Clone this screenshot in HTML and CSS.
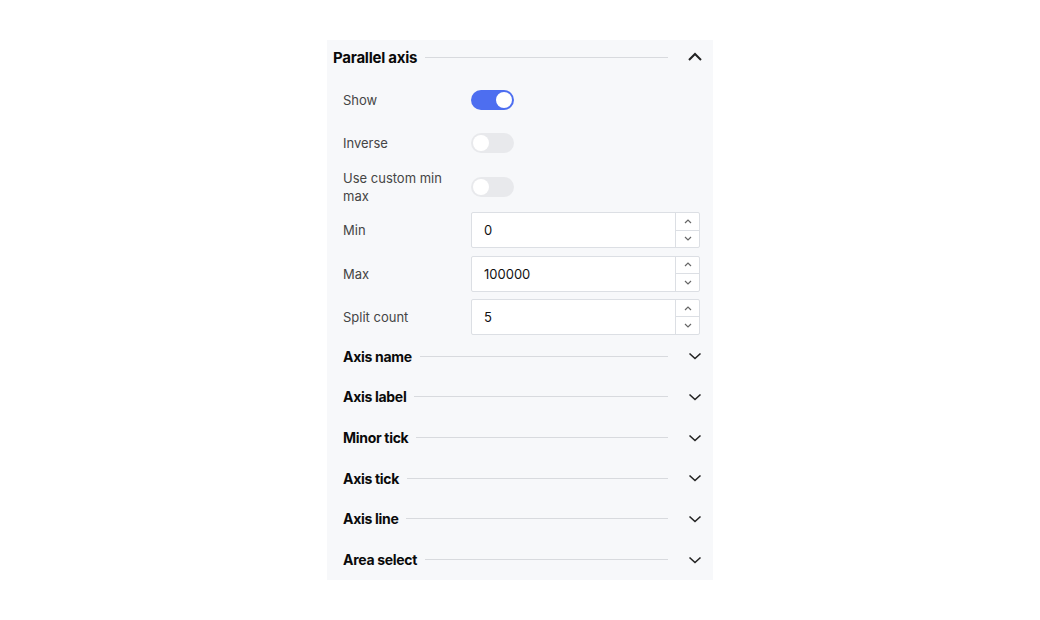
FILE: index.html
```html
<!DOCTYPE html>
<html>
<head>
<meta charset="utf-8">
<link rel="stylesheet" href="styles.css">
</head>
<body>
<div class="panel">
  <div class="head">
    <span class="head-title">Parallel axis</span>
    <span class="rule"></span>
    <svg class="chev-up" width="16" height="10" viewBox="0 0 16 10"><path d="M2 8 L8 2 L14 8" fill="none" stroke="#222" stroke-width="2"/></svg>
  </div>
  <div class="rows">
    <div class="row">
      <div class="label">Show</div>
      <div class="toggle on"><span class="knob"></span></div>
    </div>
    <div class="row">
      <div class="label">Inverse</div>
      <div class="toggle"><span class="knob"></span></div>
    </div>
    <div class="row">
      <div class="label">Use custom min max</div>
      <div class="toggle"><span class="knob"></span></div>
    </div>
    <div class="row">
      <div class="label">Min</div>
      <div class="num">
        <span class="val">0</span>
        <div class="spin">
          <span class="btn"><svg width="8" height="5" viewBox="0 0 8 5"><path d="M1 4 L4 1 L7 4" fill="none" stroke="#666" stroke-width="1.2"/></svg></span>
          <span class="btn"><svg width="8" height="5" viewBox="0 0 8 5"><path d="M1 1 L4 4 L7 1" fill="none" stroke="#666" stroke-width="1.2"/></svg></span>
        </div>
      </div>
    </div>
    <div class="row">
      <div class="label">Max</div>
      <div class="num">
        <span class="val">100000</span>
        <div class="spin">
          <span class="btn"><svg width="8" height="5" viewBox="0 0 8 5"><path d="M1 4 L4 1 L7 4" fill="none" stroke="#666" stroke-width="1.2"/></svg></span>
          <span class="btn"><svg width="8" height="5" viewBox="0 0 8 5"><path d="M1 1 L4 4 L7 1" fill="none" stroke="#666" stroke-width="1.2"/></svg></span>
        </div>
      </div>
    </div>
    <div class="row">
      <div class="label">Split count</div>
      <div class="num">
        <span class="val">5</span>
        <div class="spin">
          <span class="btn"><svg width="8" height="5" viewBox="0 0 8 5"><path d="M1 4 L4 1 L7 4" fill="none" stroke="#666" stroke-width="1.2"/></svg></span>
          <span class="btn"><svg width="8" height="5" viewBox="0 0 8 5"><path d="M1 1 L4 4 L7 1" fill="none" stroke="#666" stroke-width="1.2"/></svg></span>
        </div>
      </div>
    </div>
  </div>
  <div class="sections">
    <div class="sec"><span class="sec-title">Axis name</span><span class="rule"></span><svg class="chev" width="16" height="10" viewBox="0 0 16 10"><path d="M2.5 2.5 L8 7.5 L13.5 2.5" fill="none" stroke="#222" stroke-width="1.6"/></svg></div>
    <div class="sec"><span class="sec-title">Axis label</span><span class="rule"></span><svg class="chev" width="16" height="10" viewBox="0 0 16 10"><path d="M2.5 2.5 L8 7.5 L13.5 2.5" fill="none" stroke="#222" stroke-width="1.6"/></svg></div>
    <div class="sec"><span class="sec-title">Minor tick</span><span class="rule"></span><svg class="chev" width="16" height="10" viewBox="0 0 16 10"><path d="M2.5 2.5 L8 7.5 L13.5 2.5" fill="none" stroke="#222" stroke-width="1.6"/></svg></div>
    <div class="sec"><span class="sec-title">Axis tick</span><span class="rule"></span><svg class="chev" width="16" height="10" viewBox="0 0 16 10"><path d="M2.5 2.5 L8 7.5 L13.5 2.5" fill="none" stroke="#222" stroke-width="1.6"/></svg></div>
    <div class="sec"><span class="sec-title">Axis line</span><span class="rule"></span><svg class="chev" width="16" height="10" viewBox="0 0 16 10"><path d="M2.5 2.5 L8 7.5 L13.5 2.5" fill="none" stroke="#222" stroke-width="1.6"/></svg></div>
    <div class="sec"><span class="sec-title">Area select</span><span class="rule"></span><svg class="chev" width="16" height="10" viewBox="0 0 16 10"><path d="M2.5 2.5 L8 7.5 L13.5 2.5" fill="none" stroke="#222" stroke-width="1.6"/></svg></div>
  </div>
</div>
</body>
</html>
```

FILE: styles.css
```css
* { box-sizing: border-box; }
html, body { margin: 0; padding: 0; background: #fff; }
body {
  display: flex;
  justify-content: center;
  padding-top: 40px;
  font-family: Inter, "Open Sans", sans-serif;
  color: #111;
}
.panel {
  width: 386px;
  height: 540px;
  background: #f7f8fa;
  display: flex;
  flex-direction: column;
}
.head {
  height: 34px;
  display: flex;
  align-items: center;
  padding: 0 10px 0 6px;
}
.head-title {
  font-size: 15px;
  font-weight: 700;
  letter-spacing: -0.25px;
  color: #0a0a0a;
}
.rule {
  flex: 1;
  height: 1px;
  background: #d8dade;
  margin: 0 19px 0 8px;
}
.rows {
  display: flex;
  flex-direction: column;
  gap: 7.4px;
  padding: 8px 13px 0 16px;
}
.row {
  height: 36px;
  display: flex;
  align-items: center;
}
.label {
  width: 128px;
  padding-right: 18px;
  font-size: 13px;
  line-height: 18px;
  color: #454545;
}
.toggle {
  width: 43px;
  height: 20px;
  border-radius: 10px;
  background: #e8e9ec;
  position: relative;
}
.toggle .knob {
  position: absolute;
  top: 2px;
  left: 2px;
  width: 16px;
  height: 16px;
  border-radius: 50%;
  background: #fff;
}
.toggle.on { background: #4d6ef0; }
.toggle.on .knob { left: 25px; }
.num {
  flex: 1;
  height: 36px;
  display: flex;
  background: #fff;
  border: 1px solid #dcdfe4;
  border-radius: 2px;
}
.val {
  flex: 1;
  display: flex;
  align-items: center;
  padding-left: 12px;
  font-size: 13px;
  color: #111;
}
.spin {
  width: 24px;
  display: flex;
  flex-direction: column;
  border-left: 1px solid #dcdfe4;
}
.btn {
  flex: 1;
  display: flex;
  align-items: center;
  justify-content: center;
}
.btn + .btn { border-top: 1px solid #dcdfe4; }
.sections {
  flex: 1;
  display: flex;
  flex-direction: column;
  padding: 1px 0 0 0;
}
.sec {
  flex: 1;
  display: flex;
  align-items: center;
  padding: 0 10px 0 16px;
}
.sec-title {
  font-size: 14px;
  font-weight: 700;
  letter-spacing: -0.3px;
  color: #0a0a0a;
}
```
